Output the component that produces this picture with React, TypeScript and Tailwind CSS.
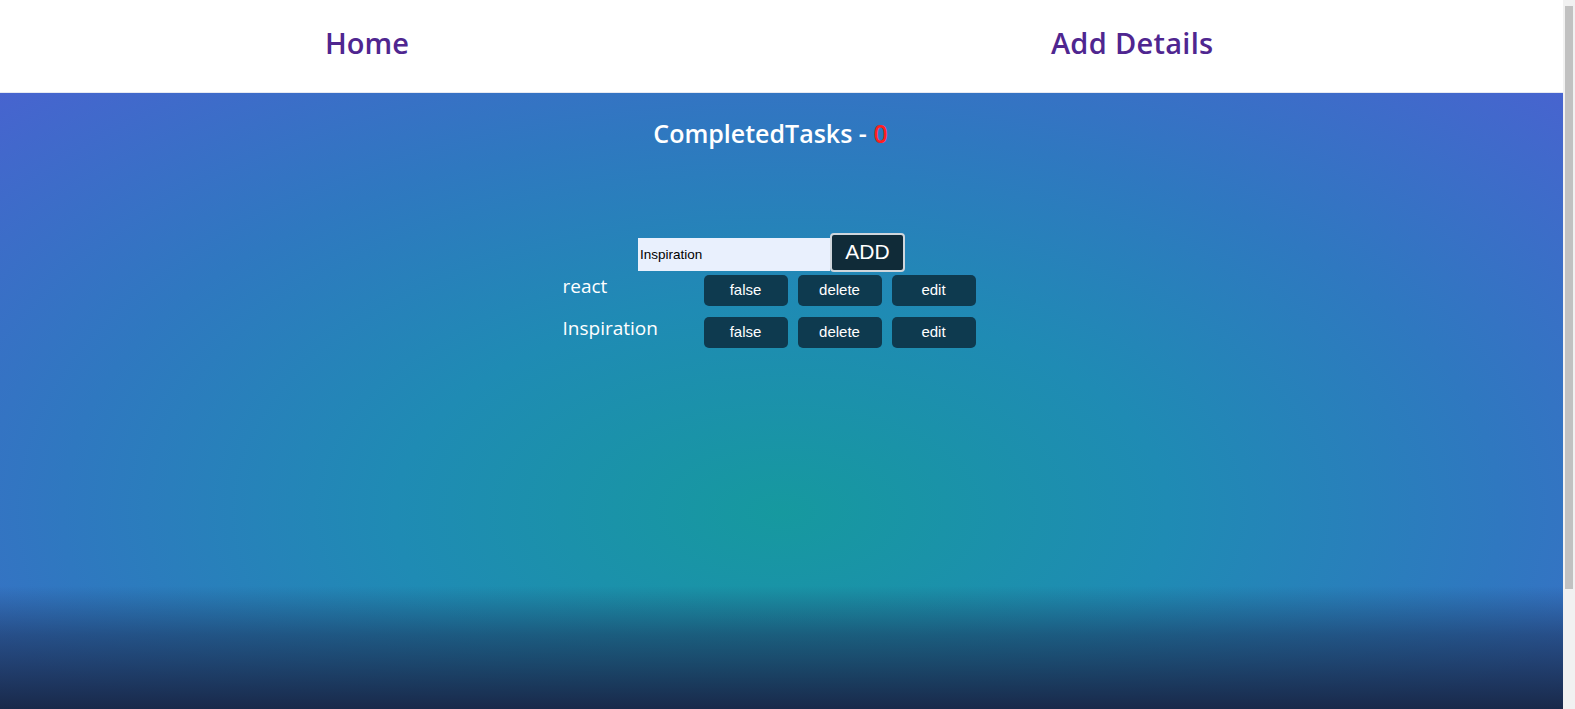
import { useState } from "react";

type Task = { id: number; title: string; done: boolean };

const initialTasks: Task[] = [
  { id: 1, title: "react", done: false },
  { id: 2, title: "Inspiration", done: false },
];

function TaskRow({ task }: { task: Task }) {
  return (
    <div className="flex items-center h-[42px]">
      <span className="w-[141px] -mt-[8px] text-[19px] text-white font-['Open_Sans',sans-serif]">
        {task.title}
      </span>
      <div className="flex gap-[10px]">
        <button className="w-[84px] h-[31px] rounded-[5px] bg-[#0e3a4f] text-white text-[15px] font-['Liberation_Sans',Arial,sans-serif]">
          {String(task.done)}
        </button>
        <button className="w-[84px] h-[31px] rounded-[5px] bg-[#0e3a4f] text-white text-[15px] font-['Liberation_Sans',Arial,sans-serif]">
          delete
        </button>
        <button className="w-[84px] h-[31px] rounded-[5px] bg-[#0e3a4f] text-white text-[15px] font-['Liberation_Sans',Arial,sans-serif]">
          edit
        </button>
      </div>
    </div>
  );
}

export default function App() {
  const [tasks] = useState<Task[]>(initialTasks);
  const [text, setText] = useState("Inspiration");
  const completed = tasks.filter((t) => t.done).length;

  return (
    <div className="flex h-[709px] w-full overflow-hidden bg-white">
      <div className="flex flex-col flex-1">
        {/* navbar */}
        <nav className="flex items-center h-[93px] shrink-0 border-b border-[#e6e9f2] bg-white font-['Open_Sans',sans-serif] text-[29px] text-[#4f2690] font-semibold">
          <a className="ml-[325px] -mt-[6px]">Home</a>
          <a className="ml-[642px] -mt-[6px] tracking-[0.3px]">Add Details</a>
        </nav>

        {/* main */}
        <main className="flex-1 flex flex-col items-center bg-[linear-gradient(to_bottom,transparent_80%,rgba(25,42,78,0.5)_88%,#19294a_100%),radial-gradient(ellipse_at_50%_68%,#16999f_0%,#1f8bb4_35%,#2f78c0_65%,#4764cf_100%)]">
          <h1 className="mt-[22px] ml-[-22px] text-[25px] font-semibold text-white font-['Open_Sans',sans-serif]">
            CompletedTasks - <span className="text-[#ff2020]">{completed}</span>
          </h1>

          <div className="mt-[80px] ml-[-20px] flex items-end">
            <input
              value={text}
              onChange={(e) => setText(e.target.value)}
              className="w-[192px] h-[33px] mb-[1px] pl-[2px] bg-[#e9f0fd] text-black text-[13.5px] outline-none font-['Liberation_Sans',Arial,sans-serif]"
            />
            <button className="w-[75px] h-[39px] rounded-[4px] border-2 border-[#cfd6dc] bg-[#102b38] text-white text-[21px] font-['Liberation_Sans',Arial,sans-serif]">
              ADD
            </button>
          </div>

          <div className="mt-[-2px] ml-[-25px] flex flex-col">
            {tasks.map((t) => (
              <TaskRow key={t.id} task={t} />
            ))}
          </div>
        </main>
      </div>

      {/* scrollbar */}
      <div className="w-[12px] shrink-0 bg-[#f1f1f1] flex flex-col items-center">
        <div className="mt-[6px] w-[8px] h-[583px] bg-[#c1c1c1]" />
      </div>
    </div>
  );
}
